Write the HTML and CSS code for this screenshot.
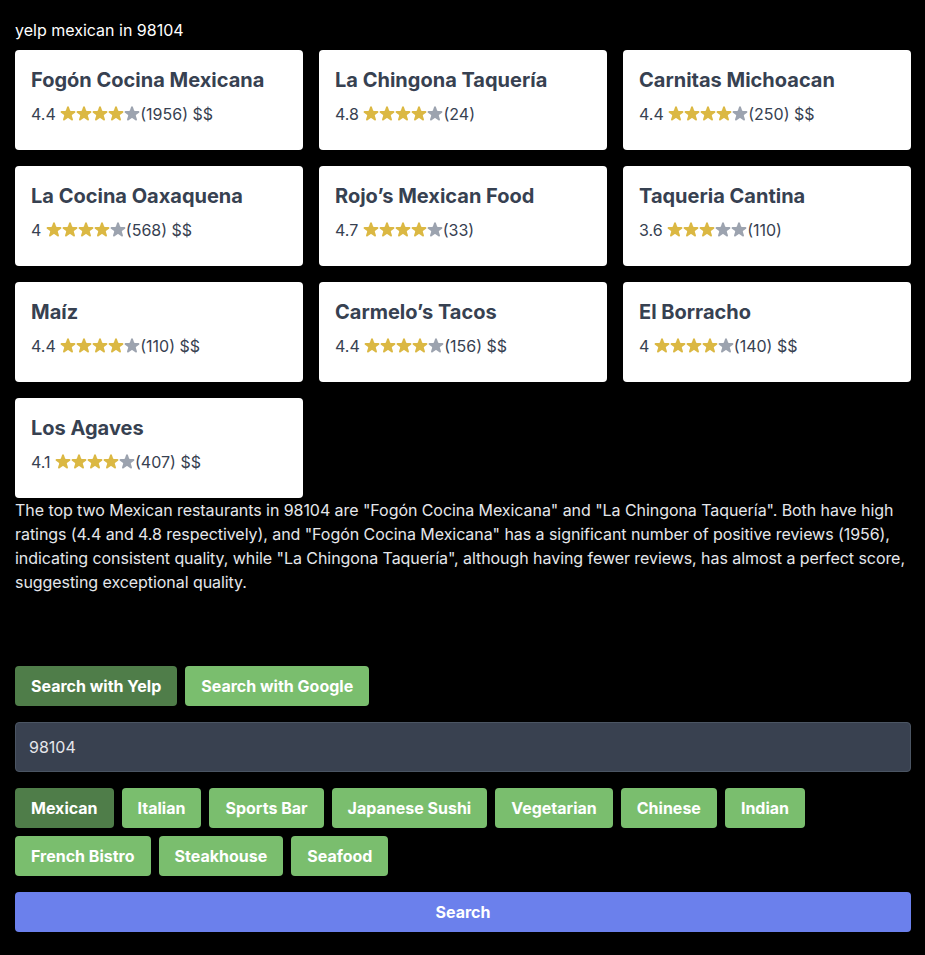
FILE: index.html
```html
<!DOCTYPE html>
<html lang="en">
<head>
<meta charset="utf-8">
<title>yelp mexican in 98104</title>
<link rel="stylesheet" href="styles.css">
</head>
<body>
<div class="page">
  <div class="query">yelp mexican in 98104</div>
  <div class="grid">
    <div class="card"><div class="name">Fogón Cocina Mexicana</div><div class="rating">4.4 <span class="stars" data-n="4"></span>(1956) $$</div></div>
    <div class="card"><div class="name">La Chingona Taquería</div><div class="rating">4.8 <span class="stars" data-n="4"></span>(24)</div></div>
    <div class="card"><div class="name">Carnitas Michoacan</div><div class="rating">4.4 <span class="stars" data-n="4"></span>(250) $$</div></div>
    <div class="card"><div class="name">La Cocina Oaxaquena</div><div class="rating">4 <span class="stars" data-n="4"></span>(568) $$</div></div>
    <div class="card"><div class="name">Rojo’s Mexican Food</div><div class="rating">4.7 <span class="stars" data-n="4"></span>(33)</div></div>
    <div class="card"><div class="name">Taqueria Cantina</div><div class="rating">3.6 <span class="stars" data-n="3"></span>(110)</div></div>
    <div class="card"><div class="name">Maíz</div><div class="rating">4.4 <span class="stars" data-n="4"></span>(110) $$</div></div>
    <div class="card"><div class="name">Carmelo’s Tacos</div><div class="rating">4.4 <span class="stars" data-n="4"></span>(156) $$</div></div>
    <div class="card"><div class="name">El Borracho</div><div class="rating">4 <span class="stars" data-n="4"></span>(140) $$</div></div>
    <div class="card"><div class="name">Los Agaves</div><div class="rating">4.1 <span class="stars" data-n="4"></span>(407) $$</div></div>
  </div>
  <p class="summary">The top two Mexican restaurants in 98104 are "Fogón Cocina Mexicana" and "La Chingona Taquería". Both have high ratings (4.4 and 4.8 respectively), and "Fogón Cocina Mexicana" has a significant number of positive reviews (1956), indicating consistent quality, while "La Chingona Taquería", although having fewer reviews, has almost a perfect score, suggesting exceptional quality.</p>

  <div class="controls">
    <div class="row">
      <button class="btn active">Search with Yelp</button>
      <button class="btn">Search with Google</button>
    </div>
    <input class="zip" type="text" value="98104">
    <div class="tags">
      <button class="btn active">Mexican</button>
      <button class="btn">Italian</button>
      <button class="btn">Sports Bar</button>
      <button class="btn">Japanese Sushi</button>
      <button class="btn">Vegetarian</button>
      <button class="btn">Chinese</button>
      <button class="btn">Indian</button>
      <button class="btn">French Bistro</button>
      <button class="btn">Steakhouse</button>
      <button class="btn">Seafood</button>
    </div>
    <button class="search">Search</button>
  </div>
</div>
<script src="script.js"></script>
</body>
</html>
```
FILE: script.js
```js
var STAR = 'M9.049 2.927c.3-.921 1.603-.921 1.902 0l1.07 3.292a1 1 0 00.95.69h3.462c.969 0 1.371 1.24.588 1.81l-2.8 2.034a1 1 0 00-.364 1.118l1.07 3.292c.3.921-.755 1.688-1.54 1.118l-2.8-2.034a1 1 0 00-1.175 0l-2.8 2.034c-.784.57-1.838-.197-1.539-1.118l1.07-3.292a1 1 0 00-.364-1.118L2.98 8.72c-.783-.57-.38-1.81.588-1.81h3.461a1 1 0 00.951-.69l1.07-3.292z';
document.querySelectorAll('.stars').forEach(function (el) {
  var n = parseInt(el.getAttribute('data-n'), 10);
  var html = '';
  for (var i = 0; i < 5; i++) {
    html += '<svg class="star ' + (i < n ? 'on' : 'off') + '" viewBox="2 2 16 16" width="16" height="16"><path d="' + STAR + '"/></svg>';
  }
  el.innerHTML = html;
});
```
FILE: styles.css
```css
* { box-sizing: border-box; }
html, body { margin: 0; padding: 0; background: #000; }
body {
  font-family: Inter, "Noto Sans", "Liberation Sans", sans-serif;
  font-size: 16px;
  line-height: 24px;
  color: #fff;
}
.page {
  width: 925px;
  padding: 18px 14px 0 15px;
}
.query { color: #fff; margin-bottom: 8px; }
.grid {
  display: grid;
  grid-template-columns: repeat(3, 288px);
  gap: 16px;
}
.card {
  background: #fff;
  border-radius: 4px;
  padding: 16px 16px 24px;
  height: 100px;
  color: #374151;
}
.name {
  font-size: 20px;
  line-height: 28px;
  font-weight: 650;
  margin-bottom: 8px;
}
.rating {
  display: flex;
  align-items: center;
  white-space: pre;
  height: 24px;
}
.stars { display: inline-flex; }
.star { display: block; width: 16px; height: 16px; }
.star.on { fill: #dbb843; }
.star.off { fill: #9ca3af; }
.summary {
  margin: 0;
  color: #e5e7eb;
  letter-spacing: -0.06px;
}
.controls { margin-top: 72px; display: flex; flex-direction: column; gap: 16px; }
.row, .tags { display: flex; flex-wrap: wrap; gap: 8px; }
.btn {
  font-family: inherit;
  font-size: 16px;
  font-weight: 700;
  line-height: 24px;
  color: #fff;
  background: #7abe6e;
  border: 0;
  border-radius: 4px;
  height: 40px;
  padding: 8px 16px;
}
.btn.active { background: #4f7d49; }
.zip {
  display: block;
  width: 896px;
  height: 50px;
  font-family: inherit;
  font-size: 16px;
  color: #e5e7eb;
  background: #394150;
  border: 1px solid #4b5563;
  border-radius: 4px;
  padding: 0 13px;
  outline: none;
}
.search {
  font-family: inherit;
  font-size: 16px;
  font-weight: 700;
  color: #fff;
  background: #6b80ec;
  border: 0;
  border-radius: 4px;
  height: 40px;
  width: 896px;
}
```
